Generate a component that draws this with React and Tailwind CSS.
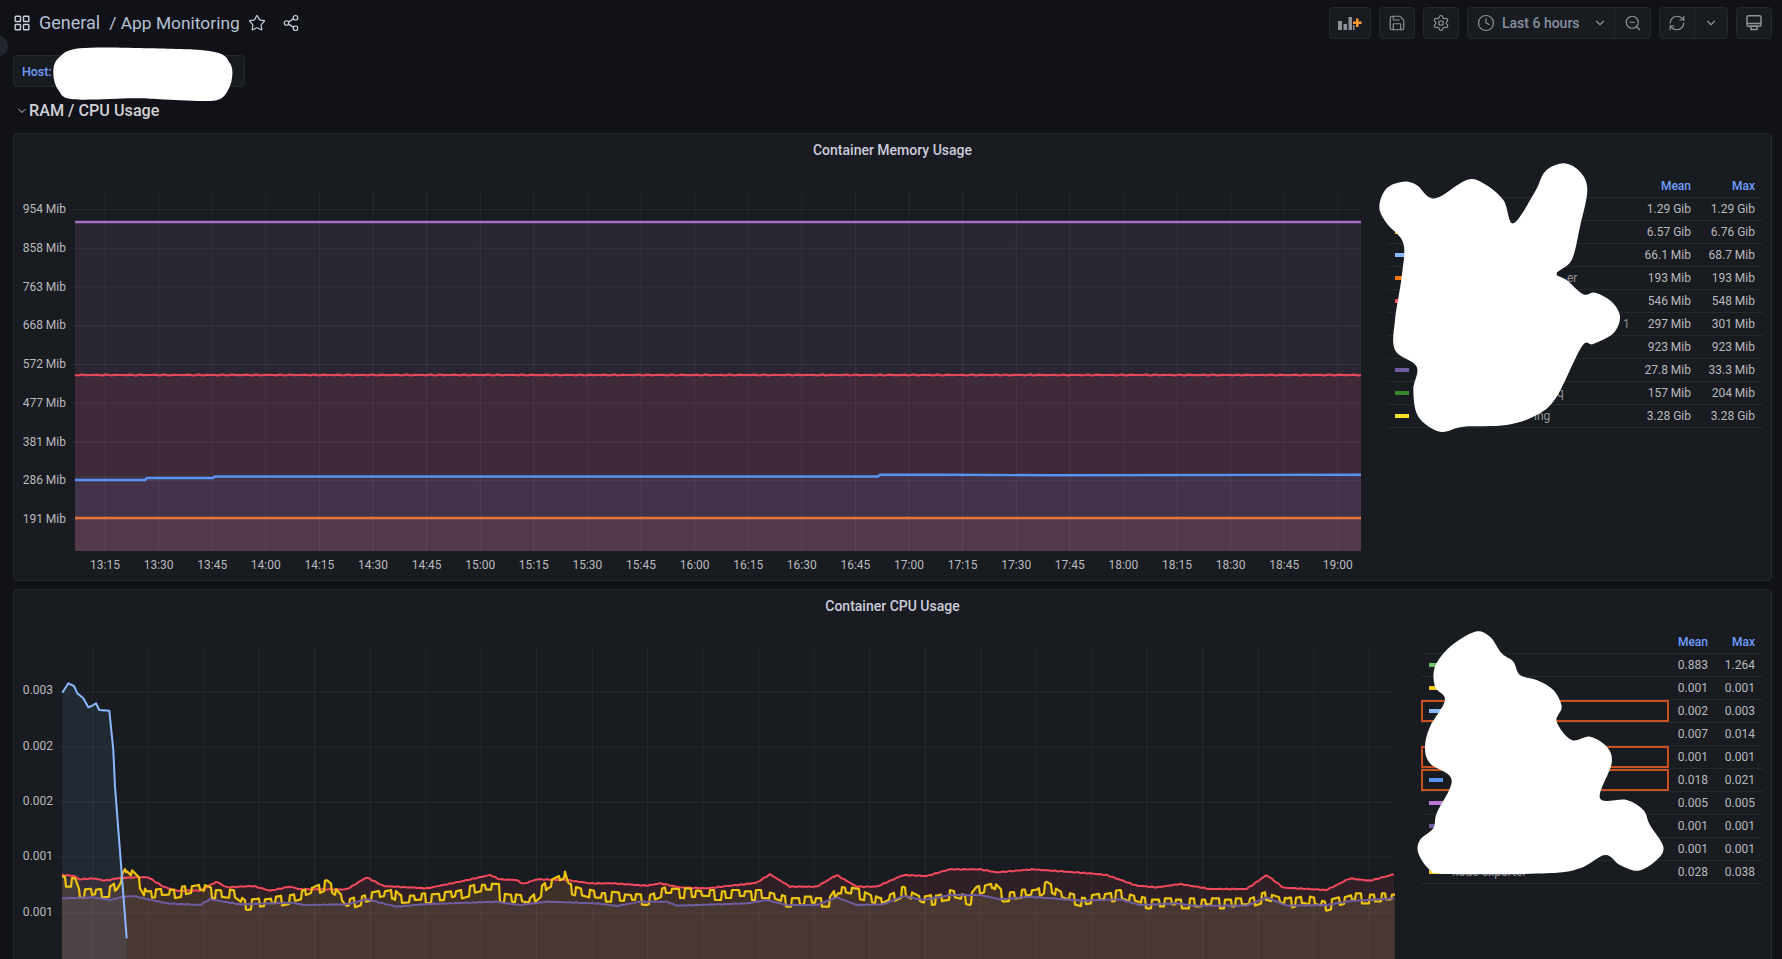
import { Star, Share2, Save, Settings, Clock, ChevronDown, ZoomOut, RefreshCw } from 'lucide-react';

// traced from the reference, in crop coordinates (3x)
const tr = (pts, ox, oy) => pts.map(([x, y]) => [x / 3 + ox, y / 3 + oy]);

const redPts = [
    ...tr([[187,645],[225,648],[235,658],[280,655],[315,662],[350,655],[400,652],[445,652],[490,680],[530,692],[600,692],[650,665],[680,682],[760,678],[810,692],[870,680],[900,688],[1040,688],[1100,652],[1150,678],[1280,685],[1380,665],[1470,645],[1499,658]], 0, 660),
    ...tr([[0,118],[50,120],[70,132],[110,118],[200,120],[270,130],[340,130],[440,137],[480,130],[540,142],[620,145],[740,132],[770,128],[810,103],[870,140],[950,140],[1010,105],[1070,140],[1130,140],[1210,105],[1280,108],[1349,88]], 500, 840),
    ...tr([[0,88],[90,88],[140,97],[250,88],[420,100],[470,105],[560,137],[620,142],[690,132],[780,147],[890,147],[950,105],[1000,143],[1130,150],[1200,115],[1260,122],[1335,102]], 950, 840),
];
const purplePts = [
    ...tr([[187,715],[280,712],[330,720],[370,710],[400,708],[500,730],[600,735],[630,718],[720,733],[880,728],[910,735],[1040,733],[1100,718],[1190,740],[1280,732],[1499,725]], 0, 660),
    ...tr([[0,187],[60,195],[140,185],[290,190],[350,198],[420,185],[500,185],[530,197],[740,190],[800,180],[860,195],[950,195],[1010,172],[1070,195],[1150,193],[1210,168],[1270,180],[1349,165]], 500, 840),
    ...tr([[0,165],[90,165],[150,178],[240,170],[400,182],[510,178],[570,195],[680,190],[730,197],[890,197],[950,172],[1010,197],[1130,195],[1200,183],[1335,175]], 950, 840),
];
const yellowPts = [
    ...tr([[187,650],[225,650],[240,690],[330,680],[350,665],[380,615],[420,655],[440,690],[520,685],[600,670],[640,685],[700,690],[740,720],[830,710],[900,695],[980,660],[1010,685],[1040,720],[1100,700],[1180,685],[1200,705],[1350,695],[1440,670],[1499,672]], 0, 660),
    ...tr([[0,155],[90,170],[145,120],[195,95],[205,130],[290,155],[330,155],[440,165],[500,140],[620,150],[800,150],[860,170],[990,170],[1015,135],[1090,150],[1140,175],[1210,140],[1270,170],[1349,155]], 500, 840),
    ...tr([[0,150],[60,165],[80,140],[130,125],[160,155],[260,145],[290,125],[340,155],[400,170],[510,150],[590,175],[890,175],[950,155],[1010,175],[1060,165],[1130,182],[1210,160],[1335,160]], 950, 840),
];
const bluePts = tr([[187,98],[205,70],[222,78],[232,100],[250,115],[265,142],[275,138],[288,130],[298,150],[328,152],[340,270],[345,380],[380,835]], 0, 660);

const interp = (pts, x) => {
    for (let i = 1; i < pts.length; i++) {
        if (x <= pts[i][0]) {
            const [x0, y0] = pts[i - 1];
            const [x1, y1] = pts[i];
            return y0 + ((y1 - y0) * (x - x0)) / (x1 - x0 || 1);
        }
    }
    return pts[pts.length - 1][1];
};

const CPU_LEFT = 62;
const CPU_RIGHT = 1395;

const sample = (pts, wobble) => {
    const out = [];
    for (let x = CPU_LEFT; x <= CPU_RIGHT; x += 2) {
        out.push([x, interp(pts, x) + Math.sin(x * 1.7) * Math.cos(x * 0.6) * wobble]);
    }
    return out;
};

const yellowWave = () => {
    const out = [];
    let x = CPU_LEFT;
    let up = true;
    let i = 0;
    while (x < CPU_RIGHT) {
        const len = 3 + ((i * 7) % 5);
        const depth = 5 + ((i * 5) % 6);
        const bump = up ? ((i * 3) % 4) * 0.7 : depth;
        const end = Math.min(x + len, CPU_RIGHT);
        for (let px = x; px <= end; px += 1) {
            out.push([px, interp(yellowPts, px) + bump]);
        }
        x = end + 1;
        up = !up;
        i++;
    }
    return out;
};

const toLine = (pts) => pts.map(([x, y]) => `${x.toFixed(1)},${y.toFixed(1)}`).join(' ');
const toArea = (pts, bottom) => `${pts[0][0]},${bottom} ${toLine(pts)} ${pts[pts.length - 1][0]},${bottom}`;

const redLine = sample(redPts, 0.5);
const purpleLine = sample(purplePts, 0.4);
const yellowLine = yellowWave();

// closed smooth outline through the traced points
const blobPath = (pts) => {
    const n = pts.length;
    let d = `M${pts[0][0]} ${pts[0][1]}`;
    for (let i = 0; i < n; i++) {
        const p0 = pts[(i - 1 + n) % n];
        const p1 = pts[i];
        const p2 = pts[(i + 1) % n];
        const p3 = pts[(i + 2) % n];
        d += `C${p1[0] + (p2[0] - p0[0]) / 6} ${p1[1] + (p2[1] - p0[1]) / 6} ${p2[0] - (p3[0] - p1[0]) / 6} ${p2[1] - (p3[1] - p1[1]) / 6} ${p2[0]} ${p2[1]}`;
    }
    return d + 'Z';
};

const blobs = [
    tr([[160,220],[175,175],[240,145],[450,145],[640,155],[690,190],[695,240],[670,290],[620,303],[480,298],[400,295],[220,298],[175,270]], 0, 0),
    tr([[130,65],[80,85],[58,140],[80,190],[130,250],[125,350],[105,480],[105,570],[170,620],[160,690],[175,770],[240,815],[310,800],[440,795],[530,765],[590,710],[665,560],[700,552],[760,520],[780,470],[755,425],[705,398],[670,403],[620,360],[590,340],[635,300],[660,200],[682,90],[660,35],[610,10],[555,35],[525,95],[460,190],[430,120],[370,70],[320,60],[240,110],[205,110],[170,75]], 1360, 160),
    tr([[285,35],[210,80],[165,140],[165,200],[195,240],[150,320],[135,380],[150,430],[215,480],[170,580],[160,625],[120,660],[115,700],[150,750],[200,762],[500,760],[600,745],[675,705],[720,735],[775,752],[830,720],[850,680],[810,615],[790,570],[740,540],[660,535],[695,430],[680,380],[630,350],[575,360],[530,305],[545,260],[520,210],[470,180],[420,165],[400,125],[365,100],[330,50]], 1380, 620),
];

const memLabels = ['954 Mib', '858 Mib', '763 Mib', '668 Mib', '572 Mib', '477 Mib', '381 Mib', '286 Mib', '191 Mib'];
const times = ['13:15', '13:30', '13:45', '14:00', '14:15', '14:30', '14:45', '15:00', '15:15', '15:30', '15:45', '16:00', '16:15', '16:30', '16:45', '17:00', '17:15', '17:30', '17:45', '18:00', '18:15', '18:30', '18:45', '19:00'];
const cpuLabels = [[692, 694, '0.003'], [747, 750, '0.002'], [802, 805, '0.002'], [857, 860, '0.001'], [913, 916, '0.001']];
const cpuGridX = Array.from({ length: 24 }, (_, i) => 92.7 + i * 55.5);

const memRows = [
    { color: '#73BF69', mean: '1.29 Gib', max: '1.29 Gib' },
    { color: '#F2CC0C', mean: '6.57 Gib', max: '6.76 Gib' },
    { color: '#8AB8FF', mean: '66.1 Mib', max: '68.7 Mib' },
    { color: '#FF780A', mean: '193 Mib', max: '193 Mib', name: 'er', indent: 'ml-[150px]' },
    { color: '#F2495C', mean: '546 Mib', max: '548 Mib' },
    { color: '#5794F2', mean: '297 Mib', max: '301 Mib', name: '1', indent: 'ml-[206px]' },
    { color: '#B877D9', mean: '923 Mib', max: '923 Mib' },
    { color: '#705DA0', mean: '27.8 Mib', max: '33.3 Mib' },
    { color: '#37872D', mean: '157 Mib', max: '204 Mib', name: 'q', indent: 'ml-[140px]' },
    { color: '#FADE2A', mean: '3.28 Gib', max: '3.28 Gib', name: 'ing', indent: 'ml-[117px]' },
];

const cpuRows = [
    { color: '#73BF69', mean: '0.883', max: '1.264' },
    { color: '#F2CC0C', mean: '0.001', max: '0.001' },
    { color: '#8AB8FF', mean: '0.002', max: '0.003', marked: true },
    { color: '#FF780A', mean: '0.007', max: '0.014' },
    { color: '#F2495C', mean: '0.001', max: '0.001', marked: true },
    { color: '#5794F2', mean: '0.018', max: '0.021', marked: true },
    { color: '#B877D9', mean: '0.005', max: '0.005' },
    { color: '#705DA0', mean: '0.001', max: '0.001' },
    { color: '#37872D', mean: '0.001', max: '0.001' },
    { color: '#F2CC0C', mean: '0.028', max: '0.038', name: 'node-exporter' },
];

function GridIcon() {
    return (
        <svg width="16" height="16" viewBox="0 0 16 16" fill="none" stroke="#c7d0d9" strokeWidth="1.4">
            <rect x="1.200" y="1.200" width="5.300" height="5.300" rx="0.6" />
            <rect x="9.500" y="1.200" width="5.300" height="5.300" rx="0.6" />
            <rect x="1.200" y="9.500" width="5.300" height="5.300" rx="0.6" />
            <rect x="9.500" y="9.500" width="5.300" height="5.300" rx="0.6" />
        </svg>
    );
}

function TvIcon() {
    return (
        <svg width="18" height="18" viewBox="0 0 18 18" fill="none" stroke="currentColor" strokeWidth="1.5">
            <rect x="2" y="1.800" width="14" height="10.400" rx="1.500" />
            <path d="M2 9.500h14" />
            <path d="M6 15.500h6v-3.300H6z" />
        </svg>
    );
}

function ToolButton({ className = '', children }) {
    return (
        <div className={`flex h-8 items-center justify-center rounded-sm border border-[#25282d] bg-[#181b1f] text-[#8e9198] ${className}`}>
            {children}
        </div>
    );
}

function MemoryChart() {
    return (
        <svg width="1360" height="412" viewBox="14 168 1360 412" className="mt-[3px] shrink-0">
            <rect x="75" y="223" width="1286" height="152" fill="#2a2733" />
            <rect x="75" y="375" width="1286" height="101" fill="#3f2a3a" />
            <rect x="75" y="476" width="1286" height="42" fill="#43334a" />
            <rect x="75" y="518" width="1286" height="33" fill="#533a4a" />
            {times.map((t, i) => (
                <line key={t} x1={105 + i * 53.6} x2={105 + i * 53.6} y1="190" y2="551" stroke="#ffffff" strokeOpacity="0.06" />
            ))}
            {memLabels.map((l, i) => (
                <g key={l}>
                    <line x1="71" x2="1361" y1={209.5 + i * 38.75} y2={209.5 + i * 38.75} stroke="#ffffff" strokeOpacity="0.06" />
                    <text x="66" y={213.2 + i * 38.75} textAnchor="end" className="fill-[#b8babf] text-xs">{l}</text>
                </g>
            ))}
            <line x1="75" x2="1361" y1="222" y2="222" stroke="#a66cc6" strokeWidth="2.4" />
            <polyline fill="none" stroke="#e8475a" strokeWidth="2.2" points={toLine(Array.from({ length: 644 }, (_, i) => [75 + i * 2, 375 + Math.sin(i * 1.3) * Math.cos(i * 0.21) * 0.5]))} />
            <polyline fill="none" stroke="#5794F2" strokeWidth="2.4" points="75,480 145,480 147,478 213,478 215,476.500 878,476.500 880,474.800 945,474.800 1050,475.200 1361,474.800" />
            <line x1="75" x2="1361" y1="518" y2="518" stroke="#e8703a" strokeWidth="2.4" />
            {times.map((t, i) => (
                <text key={t} x={105 + i * 53.6} y="569" textAnchor="middle" className="fill-[#b8babf] text-xs">{t}</text>
            ))}
        </svg>
    );
}

function CpuChart() {
    return (
        <svg width="1391" height="413" viewBox="14 623 1391 413" className="mt-[2px] shrink-0">
            <polygon points={toArea(redLine, 1040)} fill="#2f1f27" />
            <polygon points={toArea(yellowLine, 1040)} fill="#3f3128" />
            <polygon points={toArea(purpleLine, 1040)} fill="#483733" />
            <polygon points={toArea(bluePts, 1040)} fill="#8AB8FF" fillOpacity="0.09" />
            {cpuGridX.map((x) => (
                <line key={x} x1={x} x2={x} y1="648" y2="1040" stroke="#ffffff" strokeOpacity="0.06" />
            ))}
            {cpuLabels.map(([y, ty, l]) => (
                <g key={y}>
                    <line x1="58" x2={CPU_RIGHT} y1={y} y2={y} stroke="#ffffff" strokeOpacity="0.06" />
                    <text x="53" y={ty} textAnchor="end" className="fill-[#b8babf] text-xs">{l}</text>
                </g>
            ))}
            <polyline fill="none" stroke="#F2495C" strokeWidth="2" strokeLinejoin="round" points={toLine(redLine)} />
            <polyline fill="none" stroke="#ecc30e" strokeWidth="2.2" strokeLinejoin="round" points={toLine(yellowLine)} />
            <polyline fill="none" stroke="#705DA0" strokeWidth="2" strokeLinejoin="round" points={toLine(purpleLine)} />
            <polyline fill="none" stroke="#8AB8FF" strokeWidth="2" strokeLinejoin="round" points={toLine(bluePts)} />
        </svg>
    );
}

function Panel({ title, className = '', children }) {
    return (
        <section className={`flex shrink-0 flex-col rounded-sm border border-[#25282d] bg-[#181b1f] ${className}`}>
            <h2 className="flex h-[31px] shrink-0 items-center justify-center text-sm font-medium text-[#ccccdc]">{title}</h2>
            <div className="flex min-h-0 flex-1">{children}</div>
        </section>
    );
}

function MemoryLegend() {
    return (
        <div className="ml-[13px] mt-[10px] w-[376px] shrink-0 text-xs">
            <div className="flex h-[23px] items-center justify-end border-b border-[#25282d] font-medium text-[#6e9fff]">
                <span className="w-[80px] text-right">Mean</span>
                <span className="w-[72px] pr-2 text-right">Max</span>
            </div>
            {memRows.map((r) => (
                <div key={r.mean + r.color} className="flex h-[23px] items-center border-b border-[#25282d] text-[#b8babf]">
                    <span className="ml-2 h-1 w-[14px] shrink-0" style={{ backgroundColor: r.color }} />
                    <div className="ml-2 min-w-0 flex-1">
                        <span className={`block w-0 whitespace-nowrap text-[#8e9198] ${r.indent || ''}`}>{r.name}</span>
                    </div>
                    <span className="w-[80px] text-right">{r.mean}</span>
                    <span className="w-[72px] pr-2 text-right">{r.max}</span>
                </div>
            ))}
        </div>
    );
}

function CpuLegend() {
    return (
        <div className="ml-[16px] mt-[10px] w-[342px] shrink-0 text-xs">
            <div className="flex h-[23px] items-center justify-end border-b border-[#25282d] font-medium text-[#6e9fff]">
                <span className="w-[39px] text-right">Mean</span>
                <span className="w-[55px] pr-2 text-right">Max</span>
            </div>
            {cpuRows.map((r, i) => (
                <div key={i} className="flex h-[23px] items-center border-b border-[#25282d] text-[#b8babf]">
                    <div className={`flex h-full w-[248px] shrink-0 items-center border-2 ${r.marked ? 'border-[#c9501f]' : 'border-transparent'}`}>
                        <span className="ml-[6px] h-1 w-[14px] shrink-0" style={{ backgroundColor: r.color }} />
                        <span className="ml-[9px] whitespace-nowrap text-[#8e9198]">{r.name}</span>
                    </div>
                    <span className="w-[39px] text-right">{r.mean}</span>
                    <span className="w-[55px] pr-2 text-right">{r.max}</span>
                </div>
            ))}
        </div>
    );
}

export default function App() {
    return (
        <div className="relative flex h-screen flex-col overflow-hidden bg-[#111217] font-[family-name:Roboto,sans-serif]">
            {/* Top bar */}
            <header className="mt-[7px] flex h-8 shrink-0 items-center pl-[14px] pr-[10px]">
                <GridIcon />
                <span className="ml-[9px] text-lg text-[#b4c2d6]">General</span>
                <span className="ml-[9px] text-[17.4px] text-[#b4c2d6]">/ App Monitoring</span>
                <Star size={18} strokeWidth={1.6} className="ml-[8px] text-[#c7d0d9]" />
                <Share2 size={18} strokeWidth={1.6} className="ml-[16px] text-[#c7d0d9]" />
                <div className="ml-auto flex items-center gap-2">
                    <ToolButton className="w-[42px]">
                        <svg width="26" height="16" viewBox="0 0 26 16">
                            <path fill="#8e9198" d="M1 6h4v9H1zM6.500 9h3.500v6H6.500zM11.500 2h3.500v13h-3.500z" />
                            <path fill="#8e9198" d="M16 10h1.500v5H16z" />
                            <path fill="#ff9830" d="M19 3.500h2.600v3h3v2.600h-3v3H19v-3h-3V6.500h3z" />
                        </svg>
                    </ToolButton>
                    <ToolButton className="w-9"><Save size={18} strokeWidth={1.6} /></ToolButton>
                    <ToolButton className="w-9"><Settings size={18} strokeWidth={1.6} /></ToolButton>
                    <div className="flex h-8 items-center rounded-sm border border-[#25282d] bg-[#181b1f] text-[#8e9198]">
                        <div className="flex h-full w-[147px] items-center border-r border-[#25282d] pl-[9px]">
                            <Clock size={18} strokeWidth={1.6} />
                            <span className="ml-[7px] text-sm font-medium text-[#8590a0]">Last 6 hours</span>
                            <ChevronDown size={14} className="ml-[13px]" />
                        </div>
                        <div className="flex w-[35px] justify-center"><ZoomOut size={18} strokeWidth={1.6} /></div>
                    </div>
                    <div className="flex h-8 items-center rounded-sm border border-[#25282d] bg-[#181b1f] text-[#8e9198]">
                        <div className="flex h-full w-[35px] items-center justify-center border-r border-[#25282d]"><RefreshCw size={18} strokeWidth={1.6} /></div>
                        <div className="flex w-[32px] justify-center"><ChevronDown size={14} /></div>
                    </div>
                    <ToolButton className="w-9"><TvIcon /></ToolButton>
                </div>
            </header>

            {/* Variables */}
            <div className="ml-[13px] mt-4 flex h-8 w-[232px] shrink-0 items-center rounded-sm border border-[#25282d] bg-[#181b1f] pl-2 pt-[2px] text-[12.4px] font-medium text-[#6e9fff]">
                Host:
            </div>

            {/* Row header */}
            <div className="ml-[16px] mt-[8px] flex h-8 shrink-0 items-center text-[16.2px] font-medium text-[#d0d1d6]">
                <ChevronDown size={12} strokeWidth={2} />
                <span className="ml-[1px]">RAM / CPU Usage</span>
            </div>

            <main className="ml-[13px] mr-[10px] mt-[6px] flex flex-col gap-[8px]">
                <Panel title="Container Memory Usage" className="h-[448px]">
                    <MemoryChart />
                    <MemoryLegend />
                </Panel>
                <Panel title="Container CPU Usage" className="h-[448px]">
                    <CpuChart />
                    <CpuLegend />
                </Panel>
            </main>

            {/* sidebar toggle peeking in from the edge */}
            <div className="absolute left-[-14px] top-[35px] h-[22px] w-[22px] rounded-full bg-[#22252b]" />

            {/* white scribbles over the redacted names */}
            <svg width="1782" height="959" className="pointer-events-none absolute left-0 top-0">
                {blobs.map((b, i) => <path key={i} d={blobPath(b)} fill="#ffffff" />)}
            </svg>
        </div>
    );
}
